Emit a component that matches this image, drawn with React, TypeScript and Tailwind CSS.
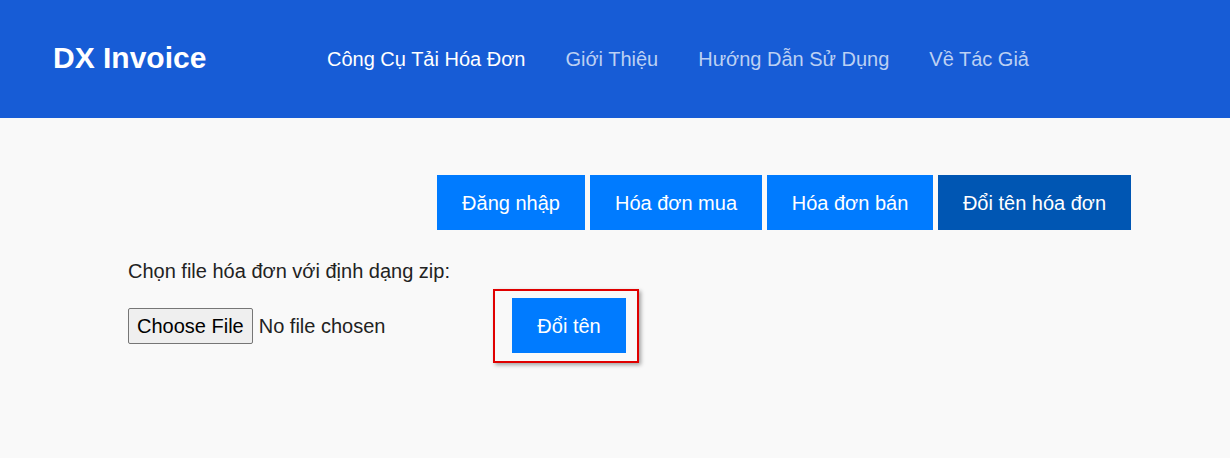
const navItems = [
  { label: 'Công Cụ Tải Hóa Đơn', active: true },
  { label: 'Giới Thiệu', active: false },
  { label: 'Hướng Dẫn Sử Dụng', active: false },
  { label: 'Về Tác Giả', active: false },
];

const tabs = [
  { label: 'Đăng nhập', width: 'w-[148px]', active: false },
  { label: 'Hóa đơn mua', width: 'w-[172px]', active: false },
  { label: 'Hóa đơn bán', width: 'w-[166px]', active: false },
  { label: 'Đổi tên hóa đơn', width: 'w-[193px]', active: true },
];

export default function App() {
  return (
    <div className="min-h-[458px] bg-[#f9f9f9] font-['Liberation_Sans',Arial,sans-serif]">
      <header className="h-[118px] bg-[#175cd6] flex items-center pl-[53px]">
        <div className="text-[30px] font-bold text-white w-[274px] leading-[34px] -mt-[2px]">DX Invoice</div>
        <nav className="flex items-center gap-[40px]">
          {navItems.map((item) => (
            <a
              key={item.label}
              href="#"
              className={`text-[20px] ${item.active ? 'text-white' : 'text-[#bcd0f3]'}`}
            >
              {item.label}
            </a>
          ))}
        </nav>
      </header>

      <main className="pl-[128px] pr-[99px] pt-[57px]">
        <div className="flex justify-end gap-[5px]">
          {tabs.map((tab) => (
            <button
              key={tab.label}
              className={`h-[55px] ${tab.width} text-[20px] text-white ${tab.active ? 'bg-[#0056b3]' : 'bg-[#007bff]'}`}
            >
              {tab.label}
            </button>
          ))}
        </div>

        <p className="mt-[29px] text-[20px] text-[#222] leading-[24px]">Chọn file hóa đơn với định dạng zip:</p>

        <div className="mt-[6px] flex items-center">
          <div className="w-[365px]">
            <input type="file" className="text-[20px] text-[#222] leading-[24px] file:text-[20px] file:leading-[24px] file:px-[8px] file:py-[5px] file:mr-[6px] file:border file:border-[#767676] file:rounded-[2px] file:bg-[#efefef] file:text-black" />
          </div>
          <div className="border-2 border-[#e00000] pl-[17px] pr-[11px] pt-[7px] pb-[8px] shadow-[2px_2px_4px_rgba(0,0,0,0.35)]">
            <button className="h-[55px] w-[114px] bg-[#007bff] text-white text-[20px]">Đổi tên</button>
          </div>
        </div>
      </main>
    </div>
  );
}
